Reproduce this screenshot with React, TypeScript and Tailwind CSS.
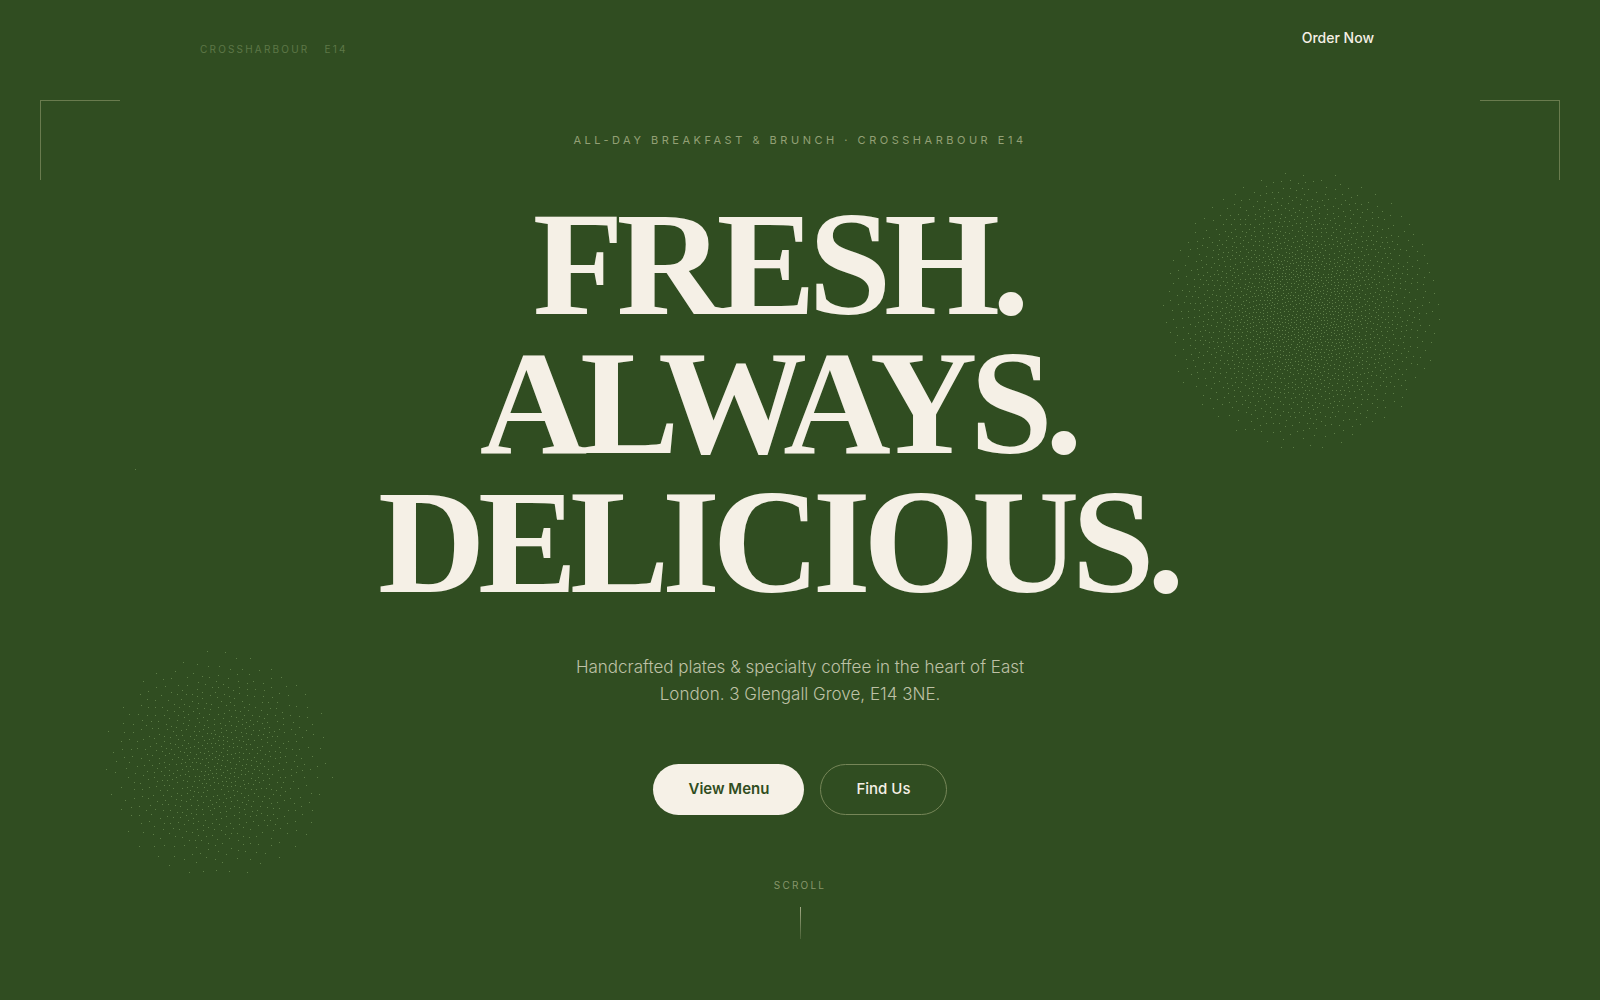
import React from "react";

function buildGrain(size: number, peak: number, seed: number): string {
  let s = seed;
  const rand = () => {
    s = (s * 1664525 + 1013904223) % 4294967296;
    return s / 4294967296;
  };
  const c = size / 2;
  const used = new Uint8Array(size * size);
  let path = "";
  for (let i = 0; i < size * size; i++) {
    const x = Math.floor(rand() * size);
    const y = Math.floor(rand() * size);
    const r = Math.hypot(x - c, y - c) / c;
    const density = peak * (1 - r);
    if (density < peak * 0.04) continue;
    const gap = Math.min(14, 0.83 / Math.sqrt(density));
    const reach = Math.ceil(gap);
    let free = true;
    for (let dy = -reach; dy <= reach && free; dy++) {
      for (let dx = -reach; dx <= reach; dx++) {
        const px = x + dx;
        const py = y + dy;
        if (px < 0 || py < 0 || px >= size || py >= size) continue;
        if (used[py * size + px] && dx * dx + dy * dy < gap * gap) {
          free = false;
          break;
        }
      }
    }
    if (free) {
      used[y * size + x] = 1;
      path += `M${x} ${y}h1v1h-1z`;
    }
  }
  return path;
}

const GRAIN_LARGE = buildGrain(290, 0.12, 7);
const GRAIN_SMALL = buildGrain(240, 0.06, 21);

function Header() {
  return (
    <header className="mx-auto flex h-[100px] w-full max-w-[1200px] items-start justify-between">
      <span className="pt-[41px] text-[10px] leading-4 tracking-[0.22em] text-[#5d7747]">
        CROSSHARBOUR{"\u00a0\u00a0"} E14
      </span>
      <button type="button" className="mt-[18px] rounded-full px-[26px] py-2.5 text-sm font-medium text-[#f5f0e6]">
        Order Now
      </button>
    </header>
  );
}

function Decorations() {
  return (
    <div aria-hidden="true" className="pointer-events-none">
      <div className="absolute left-10 top-[100px] size-20 border-l border-t border-[#697b4e]" />
      <div className="absolute right-10 top-[100px] size-20 border-r border-t border-[#697b4e]" />
      <svg className="absolute right-[153px] top-[165px]" width="290" height="290" shapeRendering="crispEdges">
        <path d={GRAIN_LARGE} fill="#5d7d47" />
      </svg>
      <svg className="absolute left-[98px] top-[643px]" width="240" height="240" shapeRendering="crispEdges">
        <path d={GRAIN_SMALL} fill="#5d7d47" />
      </svg>
      <span className="absolute left-[135px] top-[469px] size-px bg-[#5d7d47]" />
    </div>
  );
}

export default function App() {
  return (
    <div className="relative flex min-h-screen flex-col overflow-hidden bg-[#304d21] font-['Inter',sans-serif] text-[#f5f0e6]">
      <Decorations />
      <Header />
      <main className="relative flex flex-1 flex-col items-center text-center">
        <p className="mt-8 text-[11px] leading-4 tracking-[0.32em] text-[#93a075]">
          ALL-DAY BREAKFAST &amp; BRUNCH · CROSSHARBOUR E14
        </p>
        <h1 className="mt-[46px] pr-[45px] font-['Liberation_Serif',serif] text-[149px] font-bold leading-[139px] tracking-tighter">
          <span className="block">FRESH.</span>
          <span className="block">ALWAYS.</span>
          <span className="block">DELICIOUS.</span>
        </h1>
        <p className="mt-[43px] max-w-[480px] text-[17px] font-light leading-[27px] text-[#bec1a6]">
          Handcrafted plates &amp; specialty coffee in the heart of East London. 3 Glengall Grove, E14 3NE.
        </p>
        <div className="mt-14 flex gap-4">
          <a href="#menu" className="flex h-[51px] items-center rounded-full bg-[#f6f1e7] px-[35px] text-[15px] font-semibold text-[#304d21]">
            View Menu
          </a>
          <a href="#find" className="flex h-[51px] items-center rounded-full border border-[#768658] px-[35px] text-[15px] font-medium text-[#f5f0e6]">
            Find Us
          </a>
        </div>
        <div className="mt-[62px] flex flex-col items-center gap-3.5">
          <span className="text-[10px] leading-4 tracking-[0.22em] text-[#87966a]">SCROLL</span>
          <span className="h-8 w-px bg-linear-to-b from-[#a3a985] to-[#4a6236]" />
        </div>
      </main>
    </div>
  );
}
